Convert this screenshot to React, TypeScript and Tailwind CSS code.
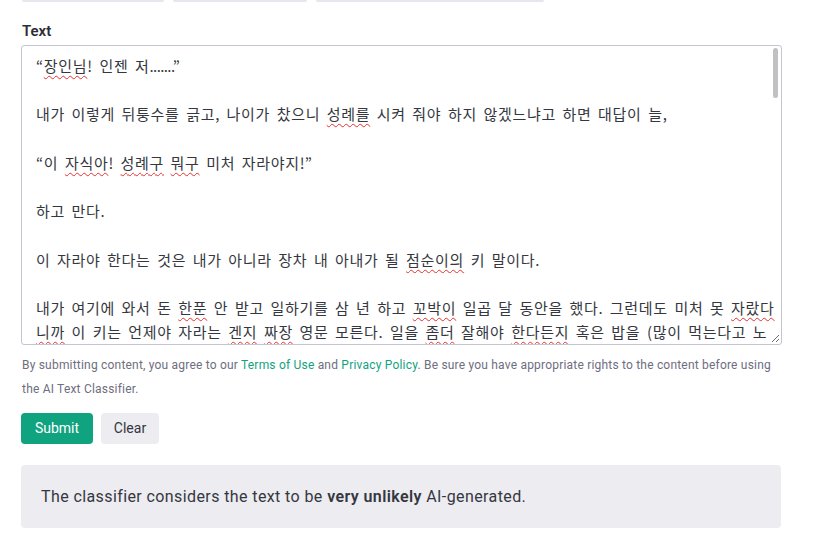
import React from "react";

// AI Text Classifier form: label, textarea with Korean text, terms notice,
// Submit / Clear, then the result banner.

// bad = red spell-check squiggle, tight = narrow dots in the ellipsis
type Seg = { t: string; bad?: boolean; tight?: boolean };

const LINES: Seg[][] = [
  [{ t: "“" }, { t: "장인님", bad: true }, { t: "! 인젠 저" }, { t: ".......”", tight: true }],
  [],
  [
    { t: "내가 이렇게 뒤퉁수를 긁고, 나이가 찼으니 " },
    { t: "성례를", bad: true },
    { t: " 시켜 줘야 하지 않겠느냐고 하면 대답이 늘," },
  ],
  [],
  [
    { t: "“이 " },
    { t: "자식아", bad: true },
    { t: "! " },
    { t: "성례구", bad: true },
    { t: " " },
    { t: "뭐구", bad: true },
    { t: " 미처 자라야지!”" },
  ],
  [],
  [{ t: "하고 만다." }],
  [],
  [
    { t: "이 자라야 한다는 것은 내가 아니라 장차 내 아내가 될 " },
    { t: "점순이의", bad: true },
    { t: " 키 말이다." },
  ],
  [],
  [
    { t: "내가 여기에 와서 돈 " },
    { t: "한푼", bad: true },
    { t: " 안 받고 일하기를 삼 년 하고 " },
    { t: "꼬박이", bad: true },
    { t: " 일곱 달 동안을 했다. 그런데도 미처 못 " },
    { t: "자랐다", bad: true },
  ],
  [
    { t: "니까", bad: true },
    { t: " 이 키는 언제야 자라는 " },
    { t: "겐지", bad: true },
    { t: " " },
    { t: "짜장", bad: true },
    { t: " 영문 모른다. 일을 " },
    { t: "좀더", bad: true },
    { t: " 잘해야 " },
    { t: "한다든지", bad: true },
    { t: " 혹은 밥을 (많이 먹는다고 노" },
  ],
];

function segClass(s: Seg): string {
  if (s.bad) {
    return "underline decoration-[#e53030] decoration-wavy decoration-1 underline-offset-[3px]";
  }
  if (s.tight) return "tracking-[-0.6px]";
  return "";
}

export default function App() {
  return (
    <div className="h-[548px] w-[816px] overflow-hidden bg-white font-['Roboto','Liberation_Sans',sans-serif]">
      {/* cut-off tab buttons above */}
      <div className="flex gap-[9px] pl-[22px]">
        <div className="h-[2px] w-[142px] rounded-b-[3px] bg-[#e6e6ec]" />
        <div className="h-[2px] w-[134px] rounded-b-[3px] bg-[#e6e6ec]" />
        <div className="h-[2px] w-[228px] rounded-b-[3px] bg-[#e6e6ec]" />
      </div>

      <div className="px-[21px]">
        <p className="mt-[20px] pl-[1px] text-[15px] font-semibold leading-[18px] text-[#2d2d35]">
          Text
        </p>

        {/* textarea */}
        <div className="relative mt-[5px] h-[300px] w-[761px] overflow-hidden rounded-[3px] border border-[#c5c5d2] bg-white">
          <div className="pl-[14px] pt-[8px] font-['Noto_Sans_CJK_KR',sans-serif] text-[15px] leading-[24.2px] tracking-[0.7px] [word-spacing:2.5px] text-[#353740]">
            {LINES.map((line, i) => (
              <div key={i} className="h-[24.2px] whitespace-pre">
                {line.map((s, j) => (
                  <span key={j} className={segClass(s)}>
                    {s.t}
                  </span>
                ))}
              </div>
            ))}
          </div>
          {/* scrollbar thumb */}
          <div className="absolute right-[3px] top-[2px] h-[50px] w-[5px] rounded-full bg-[#c1c1c1]" />
          {/* resize grip */}
          <svg
            className="absolute bottom-[1px] right-[1px]"
            width="9"
            height="9"
            viewBox="0 0 9 9"
          >
            <path d="M8 1 L1 8 M8 5 L5 8" stroke="#6b6b6b" strokeWidth="1" />
          </svg>
        </div>

        <p className="mt-[8px] pl-[1px] text-[12px] leading-[24px] tracking-[0.2px] text-[#6e6e80]">
          By submitting content, you agree to our{" "}
          <a className="text-[#10a37f]">Terms of Use</a> and{" "}
          <a className="text-[#10a37f]">Privacy Policy</a>. Be sure you have
          appropriate rights to the content before using
          <br />
          the AI Text Classifier.
        </p>

        <div className="mt-[12px] flex gap-[8px]">
          <button className="h-[31px] w-[72px] rounded-[4px] bg-[#10a37f] text-[14px] text-white">
            Submit
          </button>
          <button className="h-[31px] w-[58px] rounded-[4px] bg-[#ececf1] text-[14px] text-[#353740]">
            Clear
          </button>
        </div>

        <div className="mt-[21px] flex h-[63px] w-[760px] items-center rounded-[4px] bg-[#ececf1] px-[20px] text-[16px] tracking-[0.4px] text-[#353740]">
          <span>
            The classifier considers the text to be{" "}
            <span className="font-semibold">very unlikely</span> AI-generated.
          </span>
        </div>
      </div>
    </div>
  );
}
